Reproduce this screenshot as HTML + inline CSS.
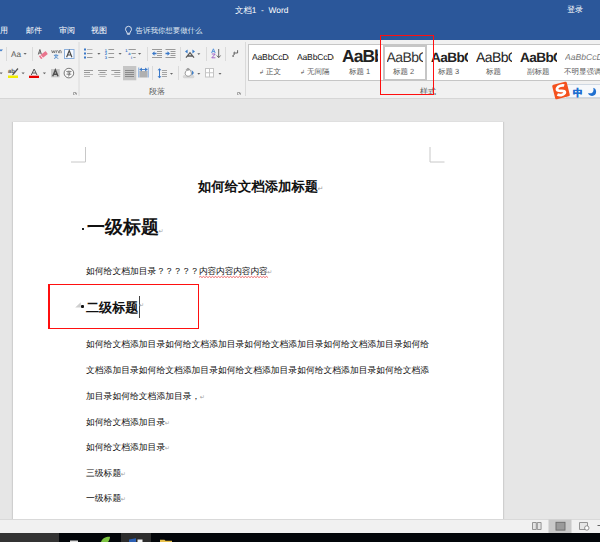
<!DOCTYPE html>
<html><head><meta charset="utf-8">
<style>
*{margin:0;padding:0;box-sizing:border-box}
html,body{width:600px;height:542px;overflow:hidden;text-rendering:geometricPrecision;background:#e6e6e6;font-family:"Liberation Sans",sans-serif;position:relative}
.a{position:absolute}
#title{left:0;top:0;width:600px;height:40px;background:#2b579a}
.tt{color:#fff;font-size:8px;line-height:10px;white-space:nowrap}
#ribbon{left:0;top:40px;width:600px;height:59px;background:#f1f1f1;border-bottom:1px solid #d6d6d6}
.sep{position:absolute;width:1px;background:#d4d4d4}
#page{left:13px;top:122px;width:490px;height:397px;background:#fff;box-shadow:-1px 0 1px #cfcfcf,1px 0 1px #cfcfcf}
.body{position:absolute;left:86px;font-size:8.8px;line-height:10px;color:#1e1e1e;white-space:nowrap}
#status{left:0;top:519px;width:600px;height:14px;background:#f1f1f1;border-top:1px solid #d9d9d9}
#task{left:0;top:533px;width:600px;height:9px;background:#03060a}
.gs{font-family:"Liberation Sans",sans-serif;color:#222;white-space:nowrap;overflow:hidden;line-height:1.2}
.gl{font-size:7.5px;line-height:10px;color:#595959;white-space:nowrap}
.doc{white-space:nowrap;color:#111;line-height:1.2}
.pm{font-size:6px;color:#a0a0a0;font-weight:normal;margin-left:-0.5px}
.wavy{text-decoration:underline wavy #e03030;text-decoration-thickness:0.5px;text-underline-offset:1px}
</style></head>
<body>
<div id="title" class="a">
  <div class="a tt" style="left:235px;top:5px;font-size:8.4px">文档1 &nbsp;- &nbsp;Word</div>
  <div class="a tt" style="left:567px;top:5px;font-size:8px">登录</div>
  <div class="a tt" style="left:-8px;top:26px">应用</div>
  <div class="a tt" style="left:26px;top:26px">邮件</div>
  <div class="a tt" style="left:59px;top:26px">审阅</div>
  <div class="a tt" style="left:91px;top:26px">视图</div>
  <div class="a tt" style="left:135.5px;top:26px;color:#dfe6f1;font-size:7.45px">告诉我你想要做什么</div>
  <svg class="a" style="left:124px;top:25px" width="9" height="11" viewBox="0 0 9 11"><path d="M4.5 1.3a3 3 0 0 0-3 3c0 1.3 0.9 2 1.4 2.8v1.2h3.2v-1.2c0.5-0.8 1.4-1.5 1.4-2.8a3 3 0 0 0-3-3z" fill="none" stroke="#e6ecf5" stroke-width="0.9"/><path d="M3.2 9.3h2.6" stroke="#e6ecf5" stroke-width="0.9"/></svg>
</div>
<div id="ribbon" class="a"></div>
<div class="a" style="left:248px;top:44px;width:360px;height:37px;background:#fff;border:1px solid #c6c6c6"></div>
<div class="a" style="left:383px;top:44.5px;width:44px;height:36px;border:2px solid #c6c6c6;background:#fff"></div>
<div class="a gs" style="left:252px;width:37px;top:52px;font-size:8.6px;letter-spacing:-0.2px">AaBbCcDc</div>
<div class="a gs" style="left:297px;width:37px;top:52px;font-size:8.6px;letter-spacing:-0.2px">AaBbCcDc</div>
<div class="a gs" style="left:342px;width:36px;top:46px;font-size:17.4px;font-weight:bold;letter-spacing:-0.9px">AaBb</div>
<div class="a gs" style="left:386.5px;width:36.5px;top:49px;font-size:14px;font-weight:normal;color:#333;letter-spacing:-0.6px">AaBbC</div>
<div class="a gs" style="left:431px;width:37px;top:49.5px;font-size:13.6px;font-weight:bold;letter-spacing:-0.6px">AaBbC</div>
<div class="a gs" style="left:476px;width:36px;top:49px;font-size:14px;letter-spacing:-0.6px">AaBbC</div>
<div class="a gs" style="left:520px;width:37px;top:49.5px;font-size:13.6px;font-weight:bold;letter-spacing:-0.6px">AaBbC</div>
<div class="a gs" style="left:565px;width:40px;top:52px;font-size:8.6px;font-style:italic;color:#777">AaBbCcDc</div>
<div class="a gl" style="left:259px;top:67px"><span style="font-size:6px">&#x21b2;</span> 正文</div>
<div class="a gl" style="left:300px;top:67px"><span style="font-size:6px">&#x21b2;</span> 无间隔</div>
<div class="a gl" style="left:349px;top:67px">标题 1</div>
<div class="a gl" style="left:393px;top:67px">标题 2</div>
<div class="a gl" style="left:438px;top:67px">标题 3</div>
<div class="a gl" style="left:486px;top:67px">标题</div>
<div class="a gl" style="left:527px;top:67px">副标题</div>
<div class="a gl" style="left:564px;top:67px">不明显强调</div>
<div class="a gl" style="left:149px;top:87px;font-size:8px">段落</div>
<div class="a gl" style="left:420px;top:87px;font-size:8px">样式</div>

<svg class="a" style="left:0;top:0" width="600" height="542" viewBox="0 0 600 542" shape-rendering="auto">
<g stroke="#dadada" stroke-width="1">
 <line x1="79" y1="42" x2="79" y2="96"/><line x1="245.5" y1="42" x2="245.5" y2="96"/>
 <line x1="6.5" y1="47" x2="6.5" y2="61"/><line x1="32.5" y1="47" x2="32.5" y2="61"/>
 <line x1="147.5" y1="47" x2="147.5" y2="61"/><line x1="180.5" y1="47" x2="180.5" y2="61"/>
 <line x1="206.5" y1="47" x2="206.5" y2="61"/><line x1="225.5" y1="47" x2="225.5" y2="61"/>
 <line x1="152.5" y1="66" x2="152.5" y2="80"/><line x1="178.5" y1="66" x2="178.5" y2="80"/>
</g>
<!-- dropdown arrows -->
<g fill="#666">
 <path d="M23.5 53h3.2l-1.6 1.8z"/>
 <path d="M97.3 53h3.2l-1.6 1.8z"/><path d="M118.5 53h3.2l-1.6 1.8z"/><path d="M138 53h3.2l-1.6 1.8z"/>
 <path d="M197.3 53.3h3l-1.5 1.7z"/>
 <path d="M-0.5 72.5h3.2l-1.6 1.8z"/><path d="M21.5 72.5h3.2l-1.6 1.8z"/><path d="M42.8 72.5h3.2l-1.6 1.8z"/>
 <path d="M170 73h3l-1.5 1.7z"/><path d="M197.3 73h3l-1.5 1.7z"/><path d="M218.5 73h3l-1.5 1.7z"/>
</g>
<path d="M-1 49.5h4l-2 2z" fill="#3a78c8"/>
<!-- Aa -->
<text x="11" y="57" font-family="Liberation Sans" font-size="8.2" fill="#5a5a5a">Aa</text>
<!-- eraser -->
<path d="M38.3 54.5l1.6-5 1.6 5M38.9 53h2" stroke="#555" stroke-width="0.9" fill="none"/>
<g transform="rotate(-38 43.3 55.2)"><rect x="39.2" y="53.4" width="8.4" height="3.6" rx="0.3" fill="#e9758d"/><rect x="40.8" y="53.4" width="0.7" height="3.6" fill="#fff"/></g>
<!-- wen -->
<path d="M51.6 50.2l0.9 2.8 0.9-2.3 0.9 2.3 0.9-2.8M56.3 50.5v2.6M56.3 51.4c0.3-0.9 2.2-1 2.2 0.2v1.5M59.7 50v3.2M59.7 51c0.6-0.8 1.5-0.6 1.5 0.3v1.9" stroke="#666" stroke-width="0.75" fill="none"/>
<path d="M56 54.2v0.9M53.9 55.3h4.4M54.8 55.5c0.6 1.6 2.2 2.6 3.5 3M57.4 55.5c-0.6 1.6-2 2.6-3.4 3" stroke="#3c7fc9" stroke-width="0.8" fill="none"/>
<!-- boxed A -->
<rect x="64.5" y="49.5" width="9.5" height="9" fill="#f7faff" stroke="#8db0dc" stroke-width="1"/>
<path d="M66.6 57.2l2.65-6.6 2.65 6.6M67.6 55h3.3" stroke="#4a4a4a" stroke-width="1.2" fill="none"/>
<!-- highlighter -->
<text x="8" y="72.8" font-family="Liberation Sans" font-size="6" fill="#555" font-weight="bold">ab</text>
<path d="M12.5 75l5.5-6.5" stroke="#555" stroke-width="1.2"/>
<rect x="8" y="75.5" width="10" height="2.5" fill="#f2ee00"/>
<!-- font color A -->
<path d="M31.3 75l2.85-6 2.85 6M32.4 73h3.5" stroke="#555" stroke-width="1" fill="none"/>
<rect x="29" y="75.7" width="10" height="2.3" fill="#e80000"/>
<!-- shaded A -->
<rect x="51" y="69" width="8.7" height="8.3" fill="#c8c8c8"/>
<path d="M52.7 76.3l2.65-6.4 2.65 6.4M53.7 74.2h3.3" stroke="#505050" stroke-width="1.4" fill="none"/>
<!-- circle char -->
<circle cx="68.9" cy="73.1" r="4.8" fill="#fafafa" stroke="#6a6a6a" stroke-width="0.9"/>
<path d="M68.9 70.6v0.8M66.6 71.9v-0.5h4.6v0.5M67.4 72.8h2.8l-1.2 0.9v2.3l-0.6 0.3M66.5 74.2h4.8" stroke="#555" stroke-width="0.7" fill="none"/>
<!-- launcher -->
<path d="M73.5 92.5h2.5M73.5 92.5v2.5M74.5 94.8l2-2M76.5 94.8v-1.5h-1.5" stroke="#888" stroke-width="0.7" fill="none"/>
<path d="M237.5 92.5h2.5M237.5 92.5v2.5M238.5 94.8l2-2M240.5 94.8v-1.5h-1.5" stroke="#888" stroke-width="0.7" fill="none"/>

<!-- bullets -->
<g fill="#3a78c8"><rect x="84" y="48.5" width="2" height="2"/><rect x="84" y="52.5" width="2" height="2"/><rect x="84" y="56.5" width="2" height="2"/></g>
<g stroke="#9a9a9a" stroke-width="1"><path d="M87 49.5h5.5" stroke="#b8b8b8"/><path d="M87 53.5h5.5M87 57.5h5.5"/></g>
<!-- numbering -->
<g fill="#3a78c8" font-family="Liberation Sans" font-size="4" font-weight="bold"><text x="104.8" y="51.5">1</text><text x="104.8" y="55.3">2</text><text x="104.8" y="59">3</text></g>
<g stroke="#9a9a9a" stroke-width="1"><path d="M108.4 49.5h5.7M108.4 53.5h5.7M108.4 57.5h5.7"/></g>
<!-- multilevel -->
<g fill="#3a78c8" font-family="Liberation Sans" font-size="4" font-weight="bold"><text x="125.3" y="51.8">1</text><text x="128.3" y="55.3">a</text><text x="131" y="59">i</text></g>
<g stroke="#9a9a9a" stroke-width="1"><path d="M128.5 49.5h7.3M131.5 53.5h4.3M133.3 57.5h2.3"/></g>
<!-- indents -->
<g stroke="#9a9a9a" stroke-width="1"><path d="M152 49.5h10M157 51.5h5M157 53.5h5M157 55.5h5M152 57.5h10"/>
<path d="M165.5 49.5h10M170.5 51.5h5M170.5 53.5h5M170.5 55.5h5M165.5 57.5h10"/></g>
<path d="M152 53.5l2.5-2.2v1.4h2v1.6h-2v1.4z" fill="#3a78c8"/>
<path d="M170 53.5l-2.5-2.2v1.4h-2v1.6h2v1.4z" fill="#3a78c8"/>
<!-- chinese layout -->
<path d="M186 57.7l4-5 4 5M187.6 56h4.8" stroke="#5a5a5a" stroke-width="1.3" fill="none"/>
<path d="M185 51.5l2.6-1.9v3.8zM195 51.5l-2.6-1.9v3.8z" fill="#3a7cc8"/>
<!-- sort -->
<path d="M211.6 53l1.8-4.2 1.8 4.2M212.3 51.6h2.2" stroke="#4a8ad8" stroke-width="0.9" fill="none"/>
<path d="M211.8 54h3.4l-3.4 3.8h3.6" stroke="#9a59c2" stroke-width="0.9" fill="none"/>
<path d="M218.7 49v8.4M216.8 55.5l1.9 2.2 1.9-2.2" stroke="#666" stroke-width="1" fill="none"/>
<!-- show marks -->
<path d="M237.6 50.2v2.8h-3M235 51.8l-1.4 1.2 1.4 1.2" stroke="#555" stroke-width="0.9" fill="none"/>
<path d="M232 56l1.1-1.1 1.1 1.1-1.1 1.1z M233.2 54.3l0.8-0.8 0.8 0.8-0.8 0.8z" fill="#555"/>
<!-- alignment -->
<g stroke="#999" stroke-width="1">
<path d="M84 70.5h9M84 72.5h6M98 70.5h9M99.5 72.5h6M111.3 70.5h9M114.3 72.5h6"/>
<path stroke="#b4b4b4" d="M84 74.5h9M84 76.5h6M98 74.5h9M99.5 76.5h6M111.3 74.5h9M114.3 76.5h6"/>
</g>
<rect x="123" y="66" width="13.3" height="14.3" fill="#c5c5c5"/>
<g stroke="#8a8a8a" stroke-width="1"><path d="M125 70.5h9M125 72.5h9M125 74.5h9M125 76.5h9"/></g>
<!-- distributed -->
<rect x="139.5" y="71" width="8" height="6.5" fill="#b0b0b0"/>
<path d="M138.75 67.5v10M148.25 67.5v10" stroke="#6a9ad8" stroke-width="0.8"/>
<path d="M139.5 69.5h8M140 69.5l1.5-1.3v2.6zM147 69.5l-1.5-1.3v2.6z" stroke="#3a78c8" stroke-width="0.9" fill="#3a78c8"/>
<!-- line spacing -->
<path d="M159.5 69v8.5" stroke="#3a78c8" stroke-width="1"/>
<path d="M157.5 70.3l2-2 2 2zM157.5 76.2l2 2 2-2z" fill="#3a78c8"/>
<g stroke="#a5a5a5" stroke-width="1"><path d="M162 70.5h5M162 72.5h5M162 74.5h5M162 76.5h5"/></g>
<!-- shading -->
<rect x="183.3" y="75.6" width="10.6" height="2.2" rx="0.8" fill="#d9d9d9" stroke="#c4c4c4" stroke-width="0.5"/>
<path d="M186.4 69.5c0.5-1.2 2.2-1.4 3-0.4l1.4 2.2c0.6 1 0.9 2.5 0.2 3.6c-0.7 1-2.3 1.6-3.6 1.2c-1.4-0.4-2.2-1.6-2.3-2.8c0-1.2 0.6-1.8 1.3-2.6z" fill="#fff" stroke="#8a8a8a" stroke-width="0.9"/>
<path d="M186.8 69.3l2.3-0.6 0.8 1.4-2.6 0.8z" fill="#9a9a9a"/>
<path d="M191.3 70.2c1.4 0.6 2.4 1.6 2.4 2.6c0 1-1 2-2.4 2.6c0.6-0.8 0.8-1.6 0.8-2.6c0-1-0.2-1.8-0.8-2.6z" fill="#3a7cc8"/>
<!-- borders -->
<rect x="205.5" y="68.5" width="8" height="8.5" fill="#fff" stroke="#c4c4c4" stroke-width="1"/>
<path d="M209.5 68.5v8.5M205.5 72.75h8" stroke="#c4c4c4" stroke-width="1"/>
</svg>

<div id="page" class="a"></div>
<svg class="a" style="left:0;top:0" width="600" height="542" viewBox="0 0 600 542">
<path d="M71 162h14.5v-15" stroke="#c8c8c8" stroke-width="1" fill="none"/>
<path d="M430 147v15h14.5" stroke="#c8c8c8" stroke-width="1" fill="none"/>
</svg>
<div class="a doc" id="t0" style="left:198px;top:179px;font-size:13.35px;font-weight:bold">如何给文档添加标题<span class="pm" style="font-size:7px">&#x21b5;</span></div>
<div class="a" style="left:82px;top:227.5px;width:2px;height:2px;background:#222"></div>
<div class="a doc" id="t1" style="left:87px;top:217px;font-size:18px;font-weight:600">一级标题<span class="pm">&#x21b5;</span></div>
<div class="a doc body" id="t2" style="top:266px">如何给文档加目录<span style="letter-spacing:-0.3px">？？？？？</span><span style="letter-spacing:-0.2px">内容内容内容内容</span><span class="pm">&#x21b5;</span></div>
<svg class="a" style="left:0;top:0" width="600" height="542" viewBox="0 0 600 542"><path id="wv" d="M199 277.3 L200.5 276.4 L202.0 277.6 L203.5 276.4 L205.0 277.6 L206.5 276.4 L208.0 277.6 L209.5 276.4 L211.0 277.6 L212.5 276.4 L214.0 277.6 L215.5 276.4 L217.0 277.6 L218.5 276.4 L220.0 277.6 L221.5 276.4 L223.0 277.6 L224.5 276.4 L226.0 277.6 L227.5 276.4 L229.0 277.6 L230.5 276.4 L232.0 277.6 L233.5 276.4 L235.0 277.6 L236.5 276.4 L238.0 277.6 L239.5 276.4 L241.0 277.6 L242.5 276.4 L244.0 277.6 L245.5 276.4 L247.0 277.6 L248.5 276.4 L250.0 277.6 L251.5 276.4 L253.0 277.6 L254.5 276.4 L256.0 277.6 L257.5 276.4 L259.0 277.6 L260.5 276.4 L262.0 277.6 L263.5 276.4 L265.0 277.6 L266.5 276.4 L268.0 277.6" stroke="#e83030" stroke-width="0.7" fill="none"/></svg>
<div class="a" style="left:47.9px;top:283.7px;width:151.2px;height:45.7px;border:1.7px solid #ff0f0f;border-left-width:2px"></div>
<div class="a" style="left:81.2px;top:305.2px;width:2.6px;height:2.6px;border-radius:1px;background:#111"></div>
<svg class="a" style="left:0;top:0" width="600" height="542" viewBox="0 0 600 542"><path d="M75.2 307.6l5.6-5.4v5.4z" fill="#cfcfcf"/></svg>
<div class="a doc" id="t3" style="left:86px;top:300px;font-size:13.1px;font-weight:bold">二级标题</div>
<div class="a" style="left:139px;top:296px;width:1px;height:22px;background:#444"></div>
<div class="a doc pm" style="left:139px;top:303px;margin:0">&#x21b5;</div>
<div class="a doc body" style="top:339px">如何给文档添加目录如何给文档添加目录如何给文档添加目录如何给文档添加目录如何给</div>
<div class="a doc body" style="top:365px">文档添加目录如何给文档添加目录如何给文档添加目录如何给文档添加目录如何给文档添</div>
<div class="a doc body" style="top:391px">加目录如何给文档添加目录，<span class="pm">&#x21b5;</span></div>
<div class="a doc body" style="top:417px">如何给文档添加目录<span class="pm">&#x21b5;</span></div>
<div class="a doc body" style="top:442px">如何给文档添加目录<span class="pm">&#x21b5;</span></div>
<div class="a doc body" style="top:468px">三级标题<span class="pm">&#x21b5;</span></div>
<div class="a doc body" style="top:493px">一级标题<span class="pm">&#x21b5;</span></div>

<div id="status" class="a"></div>
<div id="task" class="a"></div>
<div class="a" style="left:380px;top:34.8px;width:54px;height:60px;border:1.5px solid #ff0f0f"></div>
<div class="a" style="left:566px;top:84px;width:40px;height:14px;background:#f6f8fb;border:1px solid #cfd8e3"></div>
<svg class="a" style="left:0;top:0" width="600" height="542" viewBox="0 0 600 542">
<g transform="rotate(-14 561 90.5)"><rect x="553.5" y="83" width="15" height="15" rx="1.5" fill="#f4511e"/>
<path d="M565.3 86.5c-1.5-0.9-6-1.3-7.5 0.8c-1.5 2.2 1.5 3.2 3.5 3.6c2 0.4 4.2 1.4 2.5 3.2c-1.8 1.6-5.5 0.9-7.3-0.5" stroke="#fff" stroke-width="2.7" fill="none"/></g>
<text x="573" y="95.5" font-family="Liberation Sans" font-size="9.6" font-weight="bold" fill="#1e6fd0" stroke="#1e6fd0" stroke-width="0.5">中</text>
<circle cx="592" cy="91.8" r="4.1" fill="#1e6fd0"/><circle cx="589.6" cy="89.4" r="3.9" fill="#f6f8fb"/>
<!-- status bar icons -->
<rect x="548.5" y="519.5" width="23" height="13.5" fill="#c9c9c9"/>
<path d="M532.5 522.5h3.8v7h-3.8zM537.3 522.5h3.8v7h-3.8z" fill="#e3e3e3" stroke="#8a8a8a" stroke-width="0.9"/>
<rect x="556" y="522.3" width="9" height="7.8" fill="#9a9a9a" stroke="#6a6a6a" stroke-width="0.9"/>
<path d="M579.5 522.5h8v7h-8z" fill="#e6e6e6" stroke="#8a8a8a" stroke-width="0.9"/>
<circle cx="586.8" cy="528" r="2.2" fill="#fff" stroke="#777" stroke-width="0.8"/>
<path d="M597.5 525.5h3" stroke="#555" stroke-width="0.9"/>
</svg>
<div class="a" style="left:0;top:533px;width:59px;height:9px;background:#333"></div>
<div class="a" style="left:121px;top:533px;width:30px;height:9px;background:#2d2d2d"></div>
<svg class="a" style="left:0;top:0" width="600" height="542" viewBox="0 0 600 542">
<rect x="70" y="540.5" width="8" height="2" fill="#dcdcdc"/>
<path d="M101 542c1-4 5-5.5 9-5.3c0 2-1 4-2 5.3z" fill="#7cc441"/>
<path d="M129 542v-2.5l7-1.2v3.7z" fill="#2b5fb3"/><rect x="137.5" y="539.5" width="5" height="2.5" fill="#f2f2f2"/>
<path d="M160 542v-2.2h4.5l1 0.9h6.5v1.3z" fill="#e8c04a"/>
</svg>

</body></html>
